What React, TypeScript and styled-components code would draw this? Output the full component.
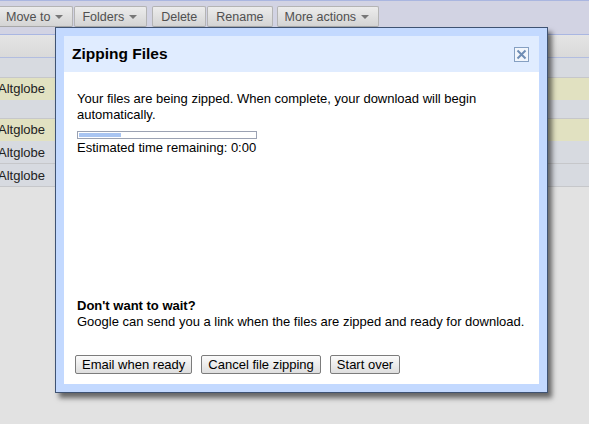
import React from 'react'
import styled, { createGlobalStyle } from 'styled-components'

const GlobalStyle = createGlobalStyle`
    html, body {
        margin: 0;
        padding: 0;
        background: #e2e2e2;
        font-family: 'Liberation Sans', Arial, sans-serif;
        font-size: 13px;
    }
`

const Page = styled.div`
    position: relative;
    width: 589px;
    height: 424px;
    overflow: hidden;
    background: #e2e2e2;
`

const Toolbar = styled.div`
    display: flex;
    align-items: flex-start;
    height: 35px;
    box-sizing: border-box;
    padding: 5px 0 0 0;
    margin-left: -2px;
    border-top: 1px solid #aab6e0;
    border-bottom: 1px solid #a9b6e2;
    background: #d2d3e3;
`

const ToolGroup = styled.div<{ gap?: number }>`
    display: flex;
    gap: 1px;
    margin-right: ${(p) => p.gap ?? 5}px;
`

const ToolButton = styled.div<{ menu?: boolean }>`
    display: flex;
    align-items: center;
    gap: 5px;
    height: 21px;
    box-sizing: border-box;
    padding: ${(p) => (p.menu ? '0 9px 0 7px' : '0 8px')};
    border: 1px solid #b4b4b4;
    border-bottom-color: #a8a8a8;
    border-radius: 2px;
    background: linear-gradient(#ececec, #d4d4d4);
    color: #505050;
    font-size: 12.5px;
    white-space: nowrap;
`

const Caret = styled.span`
    width: 0;
    height: 0;
    border-left: 4px solid transparent;
    border-right: 4px solid transparent;
    border-top: 4px solid #777;
`

const HeaderRow = styled.div`
    height: 22px;
    border-bottom: 1px solid #b2bde0;
    background: linear-gradient(#e4e4e4, #d9d9d9);
`

const Row = styled.div<{ tone: 'grey' | 'yellow'; h: number }>`
    display: flex;
    align-items: center;
    height: ${(p) => p.h}px;
    box-sizing: border-box;
    border-bottom: 1px solid ${(p) => (p.tone === 'yellow' ? '#e1e1c1' : '#c6c7ca')};
    background: ${(p) => (p.tone === 'yellow' ? '#e1e1c1' : '#d7dae0')};
    color: #222;
`

const RowLabel = styled.span`
    margin-left: -2px;
`

const Overlay = styled.div`
    position: absolute;
    left: 55px;
    top: 27px;
    width: 493px;
    height: 366px;
    box-sizing: border-box;
    border: 1px solid #3f5373;
    padding: 8px;
    background: #c3d9ff;
    box-shadow: 4px 5px 5px rgba(0, 0, 0, 0.55);
    display: flex;
    flex-direction: column;
`

const TitleBar = styled.div`
    display: flex;
    align-items: center;
    justify-content: space-between;
    height: 36px;
    padding: 0 10px 0 8px;
    background: #e0ecff;
`

const Title = styled.div`
    font-size: 15.5px;
    font-weight: bold;
    color: #000;
`

const CloseBox = styled.div`
    width: 15px;
    height: 15px;
    box-sizing: border-box;
    border: 1px solid #86a0c2;
    background: #f2f6fc;
    display: flex;
    align-items: center;
    justify-content: center;
`

const Body = styled.div`
    flex: 1;
    display: flex;
    flex-direction: column;
    background: #fff;
    padding: 19px 13px 10px 13px;
    color: #000;
    line-height: 16px;
`

const Progress = styled.div`
    width: 180px;
    height: 8px;
    box-sizing: border-box;
    border: 1px solid #9ba2b3;
    margin: 8px 0 1px 0;
    padding: 1px;
`

const ProgressFill = styled.div`
    height: 100%;
    background: #a9c5f2;
`

const Later = styled.div`
    margin-top: auto;
`

const Bold = styled.div`
    font-weight: bold;
`

const Buttons = styled.div`
    display: flex;
    gap: 9px;
    margin: 25px 0 0 -2px;
`

const Button = styled.div`
    height: 19px;
    box-sizing: border-box;
    display: flex;
    align-items: center;
    padding: 0 6px;
    border: 1px solid #7c7c7c;
    border-radius: 2px;
    background: linear-gradient(#fbfbfb, #dedede);
    color: #000;
    white-space: nowrap;
`

const rows: { tone: 'grey' | 'yellow'; h: number; label?: string }[] = [
    { tone: 'grey', h: 20 },
    { tone: 'yellow', h: 22, label: 'Altglobe' },
    { tone: 'grey', h: 19 },
    { tone: 'yellow', h: 22, label: 'Altglobe' },
    { tone: 'grey', h: 23, label: 'Altglobe' },
    { tone: 'grey', h: 23, label: 'Altglobe' },
]

const App = () => {
    const progress = 24
    return (
        <Page>
            <GlobalStyle />
            <Toolbar>
                <ToolGroup>
                    <ToolButton menu>
                        <span>Move to</span>
                        <Caret />
                    </ToolButton>
                    <ToolButton menu>
                        <span>Folders</span>
                        <Caret />
                    </ToolButton>
                </ToolGroup>
                <ToolGroup gap={4}>
                    <ToolButton>Delete</ToolButton>
                    <ToolButton>Rename</ToolButton>
                </ToolGroup>
                <ToolGroup>
                    <ToolButton menu>
                        <span>More actions</span>
                        <Caret />
                    </ToolButton>
                </ToolGroup>
            </Toolbar>
            <HeaderRow />
            {rows.map((r, i) => (
                <Row key={i} tone={r.tone} h={r.h}>
                    <RowLabel>{r.label}</RowLabel>
                </Row>
            ))}

            <Overlay>
                <TitleBar>
                    <Title>Zipping Files</Title>
                    <CloseBox>
                        <svg width="11" height="11" viewBox="0 0 11 11">
                            <path
                                d="M1.5 1.5 L9.5 9.5 M9.5 1.5 L1.5 9.5"
                                stroke="#6f8db5"
                                strokeWidth="2"
                            />
                        </svg>
                    </CloseBox>
                </TitleBar>
                <Body>
                    <div>
                        Your files are being zipped. When complete, your download will begin
                        automatically.
                    </div>
                    <Progress>
                        <ProgressFill style={{ width: `${progress}%` }} />
                    </Progress>
                    <div>Estimated time remaining: 0:00</div>
                    <Later>
                        <Bold>Don't want to wait?</Bold>
                        <div>
                            Google can send you a link when the files are zipped and ready for
                            download.
                        </div>
                    </Later>
                    <Buttons>
                        <Button>Email when ready</Button>
                        <Button>Cancel file zipping</Button>
                        <Button>Start over</Button>
                    </Buttons>
                </Body>
            </Overlay>
        </Page>
    )
}

export default App
